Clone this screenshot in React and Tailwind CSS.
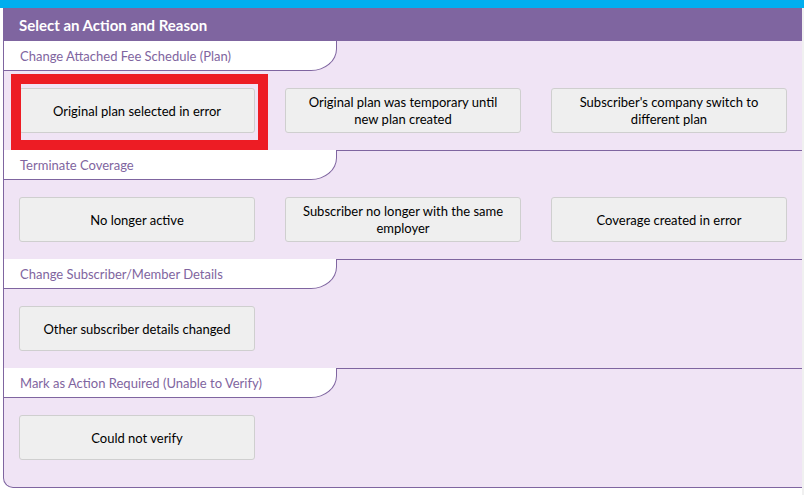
const sections = [
	{
		title: "Change Attached Fee Schedule (Plan)",
		first: true,
		buttons: [
			{ label: "Original plan selected in error", marked: true },
			{ label: "Original plan was temporary until new plan created" },
			{ label: "Subscriber's company switch to different plan" }
		]
	},
	{
		title: "Terminate Coverage",
		buttons: [
			{ label: "No longer active" },
			{ label: "Subscriber no longer with the same employer" },
			{ label: "Coverage created in error" }
		]
	},
	{
		title: "Change Subscriber/Member Details",
		buttons: [{ label: "Other subscriber details changed" }]
	},
	{
		title: "Mark as Action Required (Unable to Verify)",
		buttons: [{ label: "Could not verify" }]
	}
];

const ReasonButton = ({ label, marked }) => (
	<div className="relative">
		<button
			type="button"
			className="w-[236px] h-[45px] px-4 pt-px bg-[#efefef] border border-[#cfcfcf] rounded-[3px] text-[13px] leading-[17px] text-black text-center"
		>
			{label}
		</button>
		{marked && (
			<div className="absolute left-[-8px] top-[-14px] w-[257px] h-[76px] border-[10px] border-[#ed1c24] pointer-events-none" />
		)}
	</div>
);

const Section = ({ title, first, buttons }) => (
	<div>
		<div className="flex h-[30px]">
			<div className="w-[333px] h-[30px] bg-white border-r border-b border-[#7f65a0] rounded-br-[26px_22px] flex items-center pl-4 pt-[2px] text-[13px] text-[#7f65a0]">
				{title}
			</div>
			<div className={first ? "flex-1" : "flex-1 border-t border-[#7f65a0]"} />
		</div>
		<div className="grid grid-cols-[236px_236px_236px] gap-[30px] px-[15px] py-[17px]">
			{buttons.map((button) => (
				<ReasonButton key={button.label} {...button} />
			))}
		</div>
	</div>
);

const App = () => (
	<div className="w-[804px] h-[495px] bg-white overflow-hidden font-['Lato',sans-serif]">
		<div className="h-2 bg-[#00aeef]" />
		<div className="flex">
			<div className="w-[3px] h-[487px] bg-white" />
			<div className="w-[799px] h-[480px] bg-[#f0e4f5] border-l border-b border-[#7f65a0] rounded-bl-[10px] overflow-hidden">
				<div className="h-[33px] bg-[#7f65a0] flex items-center pl-[15px] pt-[2px] text-[15px] font-bold text-white">
					Select an Action and Reason
				</div>
				{sections.map((section) => (
					<Section key={section.title} {...section} />
				))}
			</div>
			<div className="flex-1 h-[487px] bg-[#f0f0f0]" />
		</div>
	</div>
);

export default App;
